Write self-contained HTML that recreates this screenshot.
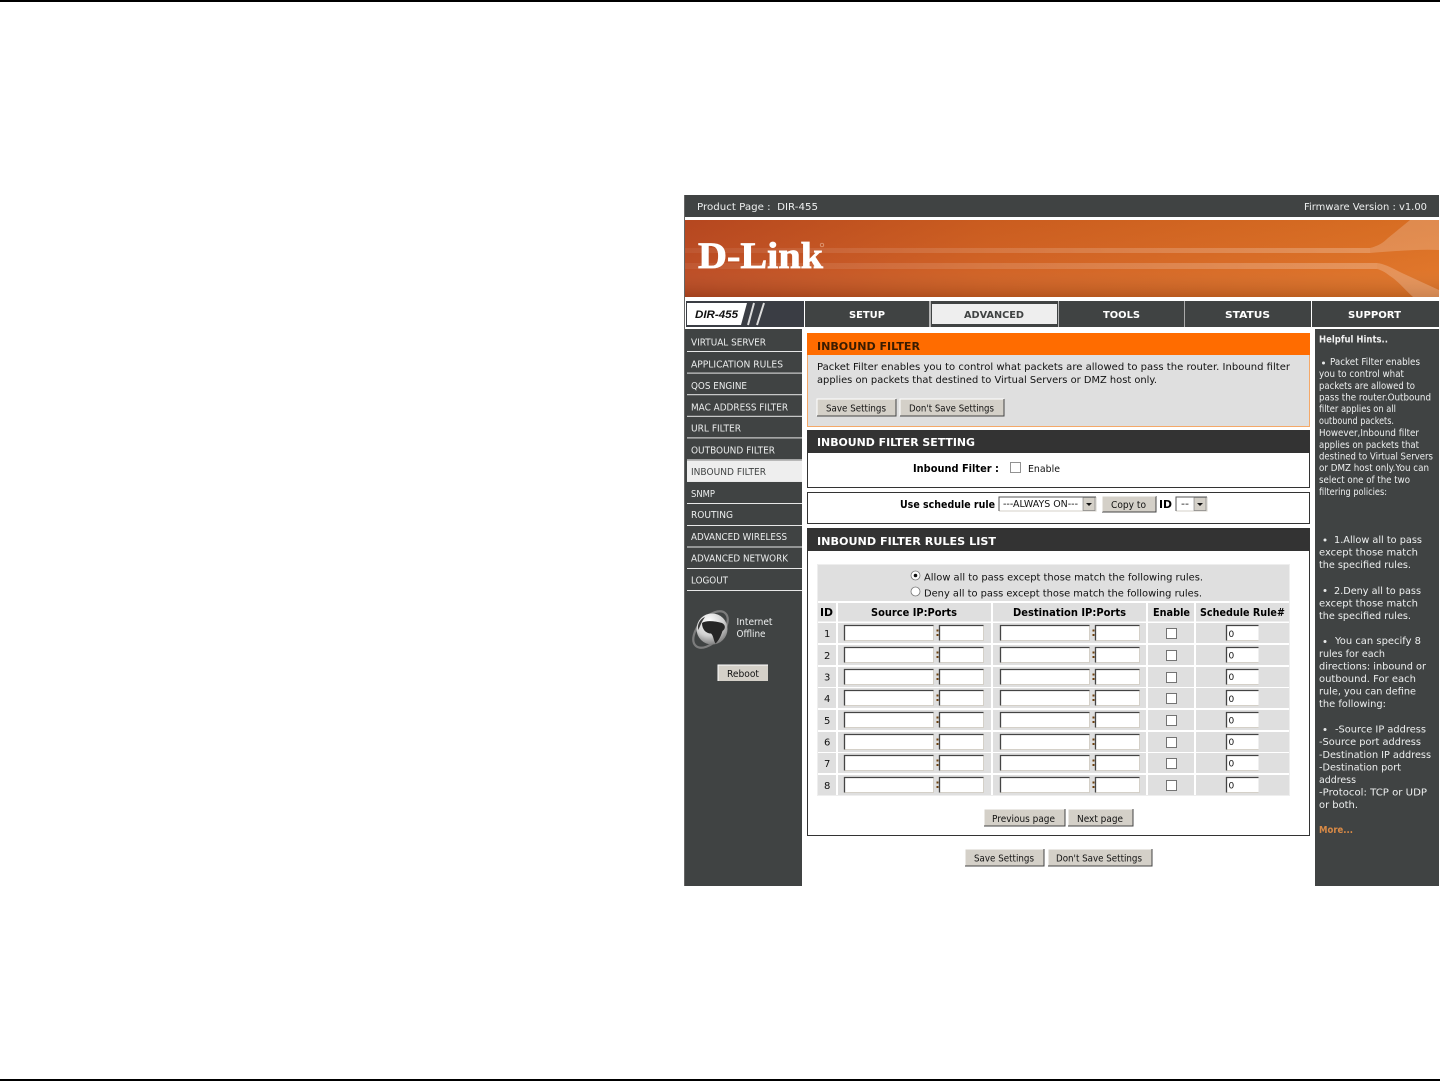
<!DOCTYPE html>
<html lang="en"><head><meta charset="utf-8"><title>Inbound Filter</title>
<style>
html,body{margin:0;padding:0;background:#fff}
svg{display:block}
text{font-family:"DejaVu Sans","Liberation Sans",sans-serif;white-space:pre}
.m{font-size:10px;fill:#eceeee}
.h{font-size:10px;fill:#eef0f0;transform:translateY(-.8px)}
.k{font-size:10px;fill:#111;transform:translateY(-.8px)}
.hd{font-size:11px;font-weight:bold;fill:#fff}
.hdo{font-size:11px;font-weight:bold;fill:#3a1c00}
.b{font-size:10.5px;font-weight:bold;fill:#000}
.n{font-size:10px;font-weight:bold;fill:#fff}
.btn{font-size:10px;fill:#111}
</style></head>
<body>
<svg width="1440" height="1081" viewBox="0 0 1440 1081" xmlns="http://www.w3.org/2000/svg">
<defs>
<linearGradient id="ban" x1="0" x2="1" y1="0" y2="0"><stop offset="0" stop-color="#bb4920"/><stop offset=".4" stop-color="#d05f20"/><stop offset="1" stop-color="#df7224"/></linearGradient>
<linearGradient id="banv" x1="0" x2="0" y1="0" y2="1"><stop offset="0" stop-color="#000" stop-opacity=".03"/><stop offset=".65" stop-color="#fff" stop-opacity=".03"/><stop offset="1" stop-color="#000" stop-opacity=".14"/></linearGradient>
<linearGradient id="strk" x1="0" x2="1" y1="0" y2="0"><stop offset="0" stop-color="#fff" stop-opacity=".06"/><stop offset=".25" stop-color="#fff" stop-opacity=".1"/><stop offset="1" stop-color="#fff" stop-opacity=".24"/></linearGradient>
<radialGradient id="glb" cx=".4" cy=".25" r=".85"><stop offset="0" stop-color="#fff"/><stop offset=".55" stop-color="#d0d0d0"/><stop offset="1" stop-color="#666"/></radialGradient>
<g id="row">
<rect x="818" y="0" width="18" height="20" fill="#dfdfdf"/>
<rect x="838" y="0" width="153" height="20" fill="#dfdfdf"/>
<rect x="993" y="0" width="153" height="20" fill="#dfdfdf"/>
<rect x="1148" y="0" width="46" height="20" fill="#dfdfdf"/>
<rect x="1196" y="0" width="93" height="20" fill="#dfdfdf"/>
<use href="#inp" transform="translate(844.5,2.5)"/>
<use href="#inps" transform="translate(939.5,2.5)"/>
<rect x="936.500" y="6.500" width="2" height="2" fill="#6e4210"/><rect x="936.500" y="11" width="2" height="2" fill="#6e4210"/>
<use href="#inp" transform="translate(1000.500,2.5)"/>
<use href="#inps" transform="translate(1095.500,2.5)"/>
<rect x="1092.500" y="6.500" width="2" height="2" fill="#6e4210"/><rect x="1092.500" y="11" width="2" height="2" fill="#6e4210"/>
<rect x="1166.500" y="5.500" width="10" height="10" fill="#fff" stroke="#666" stroke-width=".9"/>
<rect x="1226.500" y="2.5" width="32" height="15" fill="#fff"/><path d="M1226.500 17.5H1258.500" fill="none" stroke="#d4d0c8" stroke-width="1"/><path d="M1226.500 17.5V2.5H1258.500" fill="none" stroke="#444" stroke-width="1.3"/>
</g>
<g id="inp"><rect width="89" height="15" fill="#fff"/><path d="M0 15H89V0" fill="none" stroke="#d4d0c8" stroke-width="1"/><path d="M0 15V0H89" fill="none" stroke="#444" stroke-width="1.3"/></g>
<g id="inps"><rect width="44" height="15" fill="#fff"/><path d="M0 15H44V0" fill="none" stroke="#d4d0c8" stroke-width="1"/><path d="M0 15V0H44" fill="none" stroke="#444" stroke-width="1.3"/></g>
</defs>

<rect width="1440" height="1081" fill="#fff"/>
<rect x="0" y="0" width="1440" height="2" fill="#000"/>
<rect x="0" y="1079" width="1440" height="2" fill="#000"/>

<!-- frame -->
<rect x="684" y="195" width="1" height="691" fill="#666"/>
<rect x="685" y="195" width="754" height="22" fill="#404343"/>
<text class="h" x="697" y="211" textLength="121" lengthAdjust="spacingAndGlyphs">Product Page :  DIR-455</text>
<text class="h" x="1304" y="211" textLength="123" lengthAdjust="spacingAndGlyphs">Firmware Version : v1.00</text>

<!-- banner -->
<rect x="685" y="220" width="754" height="77" fill="url(#ban)"/>
<rect x="685" y="220" width="754" height="77" fill="url(#banv)"/>
<rect x="685" y="248" width="685" height="5" fill="url(#strk)"/>
<rect x="685" y="263" width="692" height="6" fill="url(#strk)"/>
<path d="M1370 248C1378 246 1383 243 1388 238L1410 220H1439V250C1420 249 1395 251 1370 253Z" fill="#fff" fill-opacity=".2"/>
<path d="M1377 263C1385 264 1392 268 1402 273L1439 290V297H1413C1405 290 1398 281 1390 276C1385 272 1381 270 1377 269Z" fill="#fff" fill-opacity=".22"/>
<text x="698" y="268" textLength="125" lengthAdjust="spacingAndGlyphs" style="font-family:'Liberation Serif',serif;font-weight:bold;font-size:37px;fill:#fff;stroke:#fff;stroke-width:.8">D-Link</text>
<circle cx="822" cy="245" r="1.800" fill="none" stroke="#e8b090" stroke-width=".7"/>

<!-- nav -->
<rect x="686" y="301" width="118" height="26" fill="#3a3d44"/>
<path d="M687 303H747L741 325H687Z" fill="#fff"/>
<text x="695" y="318" textLength="43" lengthAdjust="spacingAndGlyphs" style="font-weight:bold;font-style:italic;font-size:11px;fill:#111;font-family:'Liberation Sans',sans-serif">DIR-455</text>
<path d="M754 303L748 325M764 303L757 325" stroke="#dcdcdc" stroke-width="2"/>
<rect x="805" y="301" width="124" height="26" fill="#404343"/>
<rect x="929" y="301" width="130" height="26" fill="#b5b5b5"/>
<rect x="931" y="301" width="127" height="26" fill="#404343"/>
<rect x="932" y="304" width="125" height="20" fill="#eeeeee"/>
<rect x="1059" y="301" width="125" height="26" fill="#404343"/>
<rect x="1184" y="301" width="1" height="26" fill="#aaa"/>
<rect x="1185" y="301" width="126" height="26" fill="#404343"/>
<rect x="1312" y="301" width="127" height="26" fill="#404343"/>
<text class="n" x="849" y="318" textLength="36" lengthAdjust="spacingAndGlyphs">SETUP</text>
<text class="n" x="964" y="318" textLength="60" lengthAdjust="spacingAndGlyphs" style="fill:#404343">ADVANCED</text>
<text class="n" x="1103" y="318" textLength="37" lengthAdjust="spacingAndGlyphs">TOOLS</text>
<text class="n" x="1225" y="318" textLength="45" lengthAdjust="spacingAndGlyphs">STATUS</text>
<text class="n" x="1348" y="318" textLength="53" lengthAdjust="spacingAndGlyphs">SUPPORT</text>

<!-- left col -->
<rect x="685" y="329" width="117" height="557" fill="#404343"/>
<rect x="687" y="460.7" width="115" height="21" fill="#eeeeee"/>
<g fill="#e8e8e8">
<rect x="687" y="351" width="115" height="1"/><rect x="687" y="372.6" width="115" height="1"/><rect x="687" y="394.2" width="115" height="1"/><rect x="687" y="415.8" width="115" height="1"/><rect x="687" y="437.4" width="115" height="1"/><rect x="687" y="459.4" width="115" height="1"/><rect x="687" y="481" width="115" height="1"/><rect x="687" y="503" width="115" height="1"/><rect x="687" y="525" width="115" height="1"/><rect x="687" y="546.5" width="115" height="1"/><rect x="687" y="568" width="115" height="1"/><rect x="687" y="590" width="115" height="1"/>
</g>
<text class="m" x="691" y="345.5" textLength="75" lengthAdjust="spacingAndGlyphs">VIRTUAL SERVER</text>
<text class="m" x="691" y="367.5" textLength="92" lengthAdjust="spacingAndGlyphs">APPLICATION RULES</text>
<text class="m" x="691" y="389" textLength="56" lengthAdjust="spacingAndGlyphs">QOS ENGINE</text>
<text class="m" x="691" y="410.5" textLength="97" lengthAdjust="spacingAndGlyphs">MAC ADDRESS FILTER</text>
<text class="m" x="691" y="431.5" textLength="50" lengthAdjust="spacingAndGlyphs">URL FILTER</text>
<text class="m" x="691" y="453.5" textLength="84" lengthAdjust="spacingAndGlyphs">OUTBOUND FILTER</text>
<text class="m" x="691" y="475" textLength="75" lengthAdjust="spacingAndGlyphs" style="fill:#404343">INBOUND FILTER</text>
<text class="m" x="691" y="497" textLength="24" lengthAdjust="spacingAndGlyphs">SNMP</text>
<text class="m" x="691" y="518" textLength="42" lengthAdjust="spacingAndGlyphs">ROUTING</text>
<text class="m" x="691" y="540" textLength="96" lengthAdjust="spacingAndGlyphs">ADVANCED WIRELESS</text>
<text class="m" x="691" y="561.500" textLength="97" lengthAdjust="spacingAndGlyphs">ADVANCED NETWORK</text>
<text class="m" x="691" y="583.5" textLength="37" lengthAdjust="spacingAndGlyphs">LOGOUT</text>

<!-- globe -->
<ellipse cx="710.500" cy="629.500" rx="22" ry="12" transform="rotate(-48 710.500 629.500)" fill="none" stroke="#7c7c7c" stroke-width="2.2"/>
<circle cx="712" cy="629" r="15.500" fill="url(#glb)"/>
<path d="M702 623C706 620 715 621 722 623C726 625 725.500 629 722.500 631C721 636 718.500 641 715.500 643.500C713.500 640.500 713.500 635.500 711 633.500C706 633.500 702 629.500 702 623Z" fill="#262626"/>
<path d="M698 626C699 621 702 618 705 617L703 620C701 623 700 627 698 630Z" fill="#3a3a3a"/>
<text class="h" x="736.500" y="626" textLength="36" lengthAdjust="spacingAndGlyphs">Internet</text>
<text class="h" x="736.500" y="638" textLength="29" lengthAdjust="spacingAndGlyphs">Offline</text>
<rect x="718" y="665" width="50" height="16" fill="#d4d0c8"/><path d="M718 681V665H768" fill="none" stroke="#fff" stroke-width="1"/>
<text class="btn" x="727" y="677" textLength="32" lengthAdjust="spacingAndGlyphs">Reboot</text>

<!-- main: intro -->
<rect x="807" y="333" width="503" height="94" fill="#f4a868"/>
<rect x="808" y="355" width="501" height="71" fill="#dfdfdf"/>
<rect x="807" y="333" width="503" height="22" fill="#ff6c00"/>
<text class="hdo" x="817" y="350" textLength="103" lengthAdjust="spacingAndGlyphs">INBOUND FILTER</text>
<text class="k" x="817" y="371" textLength="473" lengthAdjust="spacingAndGlyphs">Packet Filter enables you to control what packets are allowed to pass the router. Inbound filter</text>
<text class="k" x="817" y="384" textLength="340" lengthAdjust="spacingAndGlyphs">applies on packets that destined to Virtual Servers or DMZ host only.</text>
<g>
<rect x="817" y="399" width="79" height="17" fill="#d4d0c8"/><path d="M817 416V399H896" fill="none" stroke="#fff"/><path d="M817 416H896V399" fill="none" stroke="#444"/>
<text class="btn" x="826" y="411.500" textLength="60" lengthAdjust="spacingAndGlyphs">Save Settings</text>
<rect x="900" y="399" width="104" height="17" fill="#d4d0c8"/><path d="M900 416V399H1004" fill="none" stroke="#fff"/><path d="M900 416H1004V399" fill="none" stroke="#444"/>
<text class="btn" x="909" y="411.500" textLength="85" lengthAdjust="spacingAndGlyphs">Don't Save Settings</text>
</g>

<!-- setting -->
<rect x="807.500" y="430.500" width="502" height="57" fill="#fff" stroke="#333"/>
<rect x="807" y="430" width="503" height="23" fill="#333"/>
<text class="hd" x="817" y="446" textLength="158" lengthAdjust="spacingAndGlyphs">INBOUND FILTER SETTING</text>
<text class="b" x="913" y="472" textLength="86" lengthAdjust="spacingAndGlyphs">Inbound Filter :</text>
<rect x="1010.500" y="462.500" width="10" height="10" fill="#fff" stroke="#777" stroke-width=".8"/>
<text class="k" x="1028" y="473" textLength="32" lengthAdjust="spacingAndGlyphs">Enable</text>

<!-- schedule -->
<rect x="807.500" y="492.500" width="502" height="31" fill="#fff" stroke="#333"/>
<text class="b" x="900" y="508" textLength="95" lengthAdjust="spacingAndGlyphs">Use schedule rule</text>
<rect x="999" y="497" width="97" height="14" fill="#fff"/><path d="M999 511H1096V497" fill="none" stroke="#d4d0c8"/><path d="M999 511V497H1096" fill="none" stroke="#555"/>
<text class="k" x="1003" y="508" textLength="75" lengthAdjust="spacingAndGlyphs">---ALWAYS ON---</text>
<rect x="1083" y="497.500" width="12" height="13" fill="#d4d0c8" stroke="#777" stroke-width=".6"/><path d="M1086 503H1092L1089 506Z" fill="#111"/>
<rect x="1102" y="496" width="54" height="16" fill="#d4d0c8"/><path d="M1102 512H1156V496" fill="none" stroke="#444"/><path d="M1102 512V496H1156" fill="none" stroke="#fff"/>
<text class="btn" x="1111" y="508" textLength="35" lengthAdjust="spacingAndGlyphs">Copy to</text>
<text class="b" x="1159" y="508" textLength="13" lengthAdjust="spacingAndGlyphs">ID</text>
<rect x="1176" y="497" width="31" height="14" fill="#fff"/><path d="M1176 511H1207V497" fill="none" stroke="#d4d0c8"/><path d="M1176 511V497H1207" fill="none" stroke="#555"/>
<text class="k" x="1181" y="508" textLength="8" lengthAdjust="spacingAndGlyphs">--</text>
<rect x="1194" y="497.500" width="12" height="13" fill="#d4d0c8" stroke="#777" stroke-width=".6"/><path d="M1197 503H1203L1200 506Z" fill="#111"/>

<!-- rules -->
<rect x="807.500" y="528.500" width="502" height="307" fill="#fff" stroke="#333"/>
<rect x="807" y="528" width="503" height="23" fill="#333"/>
<text class="hd" x="817" y="545" textLength="179" lengthAdjust="spacingAndGlyphs">INBOUND FILTER RULES LIST</text>
<rect x="817.500" y="564.500" width="472" height="231" fill="none" stroke="#eeeeee"/>
<rect x="818" y="565" width="471" height="36" fill="#dfdfdf"/>
<circle cx="915.500" cy="575.500" r="4.500" fill="#fff" stroke="#777" stroke-width=".8"/><circle cx="915.500" cy="575.500" r="1.800" fill="#111"/>
<circle cx="915.500" cy="591.500" r="4.500" fill="#fff" stroke="#777" stroke-width=".8"/>
<text class="k" x="924" y="581.500" textLength="279" lengthAdjust="spacingAndGlyphs">Allow all to pass except those match the following rules.</text>
<text class="k" x="924" y="597.500" textLength="278" lengthAdjust="spacingAndGlyphs">Deny all to pass except those match the following rules.</text>
<rect x="818" y="603" width="18" height="18.500" fill="#dfdfdf"/>
<rect x="838" y="603" width="153" height="18.500" fill="#dfdfdf"/>
<rect x="993" y="603" width="153" height="18.500" fill="#dfdfdf"/>
<rect x="1148" y="603" width="46" height="18.500" fill="#dfdfdf"/>
<rect x="1196" y="603" width="93" height="18.500" fill="#dfdfdf"/>
<text class="b" x="820" y="616" textLength="13" lengthAdjust="spacingAndGlyphs">ID</text>
<text class="b" x="871" y="616" textLength="86" lengthAdjust="spacingAndGlyphs">Source IP:Ports</text>
<text class="b" x="1013" y="616" textLength="113" lengthAdjust="spacingAndGlyphs">Destination IP:Ports</text>
<text class="b" x="1153" y="616" textLength="37" lengthAdjust="spacingAndGlyphs">Enable</text>
<text class="b" x="1200" y="616" textLength="85" lengthAdjust="spacingAndGlyphs">Schedule Rule#</text>

<use href="#row" y="623"/>
<use href="#row" y="645"/>
<use href="#row" y="667"/>
<use href="#row" y="688"/>
<use href="#row" y="710"/>
<use href="#row" y="732"/>
<use href="#row" y="753"/>
<use href="#row" y="775"/>
<g class="rn">
<text class="k" x="824" y="638">1</text><text class="k" x="824" y="660">2</text><text class="k" x="824" y="681.500">3</text><text class="k" x="824" y="703">4</text><text class="k" x="824" y="725">5</text><text class="k" x="824" y="746.500">6</text><text class="k" x="824" y="768">7</text><text class="k" x="824" y="790">8</text>
<text class="k" x="1228.500" y="638" style="font-size:9px">0</text><text class="k" x="1228.500" y="659.500" style="font-size:9px">0</text><text class="k" x="1228.500" y="681" style="font-size:9px">0</text><text class="k" x="1228.500" y="703" style="font-size:9px">0</text><text class="k" x="1228.500" y="724.500" style="font-size:9px">0</text><text class="k" x="1228.500" y="746" style="font-size:9px">0</text><text class="k" x="1228.500" y="767.500" style="font-size:9px">0</text><text class="k" x="1228.500" y="789.500" style="font-size:9px">0</text>
</g>

<rect x="984" y="809" width="81" height="17" fill="#d4d0c8"/><path d="M984 826V809H1065" fill="none" stroke="#fff"/><path d="M984 826H1065V809" fill="none" stroke="#444"/>
<text class="btn" x="992" y="822" textLength="63" lengthAdjust="spacingAndGlyphs">Previous page</text>
<rect x="1068" y="809" width="65" height="17" fill="#d4d0c8"/><path d="M1068 826V809H1133" fill="none" stroke="#fff"/><path d="M1068 826H1133V809" fill="none" stroke="#444"/>
<text class="btn" x="1077" y="822" textLength="46" lengthAdjust="spacingAndGlyphs">Next page</text>

<rect x="965" y="849" width="79" height="17" fill="#d4d0c8"/><path d="M965 866V849H1044" fill="none" stroke="#fff"/><path d="M965 866H1044V849" fill="none" stroke="#444"/>
<text class="btn" x="974" y="861.500" textLength="60" lengthAdjust="spacingAndGlyphs">Save Settings</text>
<rect x="1048" y="849" width="104" height="17" fill="#d4d0c8"/><path d="M1048 866V849H1152" fill="none" stroke="#fff"/><path d="M1048 866H1152V849" fill="none" stroke="#444"/>
<text class="btn" x="1056" y="861.500" textLength="86" lengthAdjust="spacingAndGlyphs">Don't Save Settings</text>

<!-- right col -->
<rect x="1315" y="329" width="124" height="557" fill="#404343"/>
<text x="1319" y="342.500" textLength="69" lengthAdjust="spacingAndGlyphs" style="font-size:10px;font-weight:bold;fill:#f0f0f0">Helpful Hints..</text>
<g fill="#e8eaea"><circle cx="1323.500" cy="363" r="1.500"/><circle cx="1325" cy="540" r="1.500"/><circle cx="1325" cy="590.500" r="1.500"/><circle cx="1325" cy="641.500" r="1.500"/><circle cx="1325" cy="729.500" r="1.500"/></g>
<text class="h" x="1330" y="366" textLength="90" lengthAdjust="spacingAndGlyphs">Packet Filter enables</text>
<text class="h" x="1319" y="378" textLength="85" lengthAdjust="spacingAndGlyphs">you to control what</text>
<text class="h" x="1319" y="390" textLength="96" lengthAdjust="spacingAndGlyphs">packets are allowed to</text>
<text class="h" x="1319" y="401.500" textLength="112" lengthAdjust="spacingAndGlyphs">pass the router.Outbound</text>
<text class="h" x="1319" y="413" textLength="77" lengthAdjust="spacingAndGlyphs">filter applies on all</text>
<text class="h" x="1319" y="425" textLength="75" lengthAdjust="spacingAndGlyphs">outbound packets.</text>
<text class="h" x="1319" y="437" textLength="100" lengthAdjust="spacingAndGlyphs">However,Inbound filter</text>
<text class="h" x="1319" y="449" textLength="100" lengthAdjust="spacingAndGlyphs">applies on packets that</text>
<text class="h" x="1319" y="460.500" textLength="114" lengthAdjust="spacingAndGlyphs">destined to Virtual Servers</text>
<text class="h" x="1319" y="472" textLength="110" lengthAdjust="spacingAndGlyphs">or DMZ host only.You can</text>
<text class="h" x="1319" y="484" textLength="91" lengthAdjust="spacingAndGlyphs">select one of the two</text>
<text class="h" x="1319" y="496" textLength="68" lengthAdjust="spacingAndGlyphs">filtering policies:</text>

<text class="h" x="1334" y="544" textLength="88" lengthAdjust="spacingAndGlyphs">1.Allow all to pass</text>
<text class="h" x="1319" y="556.500" textLength="99" lengthAdjust="spacingAndGlyphs">except those match</text>
<text class="h" x="1319" y="569" textLength="92" lengthAdjust="spacingAndGlyphs">the specified rules.</text>
<text class="h" x="1334" y="595" textLength="87" lengthAdjust="spacingAndGlyphs">2.Deny all to pass</text>
<text class="h" x="1319" y="607.500" textLength="99" lengthAdjust="spacingAndGlyphs">except those match</text>
<text class="h" x="1319" y="620" textLength="92" lengthAdjust="spacingAndGlyphs">the specified rules.</text>
<text class="h" x="1335" y="645" textLength="86" lengthAdjust="spacingAndGlyphs">You can specify 8</text>
<text class="h" x="1319" y="658" textLength="66" lengthAdjust="spacingAndGlyphs">rules for each</text>
<text class="h" x="1319" y="670.500" textLength="107" lengthAdjust="spacingAndGlyphs">directions: inbound or</text>
<text class="h" x="1319" y="683" textLength="97" lengthAdjust="spacingAndGlyphs">outbound. For each</text>
<text class="h" x="1319" y="695.500" textLength="97" lengthAdjust="spacingAndGlyphs">rule, you can define</text>
<text class="h" x="1319" y="708" textLength="67" lengthAdjust="spacingAndGlyphs">the following:</text>
<text class="h" x="1335" y="733.500" textLength="91" lengthAdjust="spacingAndGlyphs">-Source IP address</text>
<text class="h" x="1319" y="746" textLength="102" lengthAdjust="spacingAndGlyphs">-Source port address</text>
<text class="h" x="1319" y="759" textLength="112" lengthAdjust="spacingAndGlyphs">-Destination IP address</text>
<text class="h" x="1319" y="771.500" textLength="82" lengthAdjust="spacingAndGlyphs">-Destination port</text>
<text class="h" x="1319" y="784" textLength="37" lengthAdjust="spacingAndGlyphs">address</text>
<text class="h" x="1319" y="796.500" textLength="108" lengthAdjust="spacingAndGlyphs">-Protocol: TCP or UDP</text>
<text class="h" x="1319" y="809" textLength="39" lengthAdjust="spacingAndGlyphs">or both.</text>
<text x="1319" y="833" textLength="34" lengthAdjust="spacingAndGlyphs" style="font-size:10px;font-weight:bold;fill:#d98a46">More...</text>
</svg>
</body></html>
